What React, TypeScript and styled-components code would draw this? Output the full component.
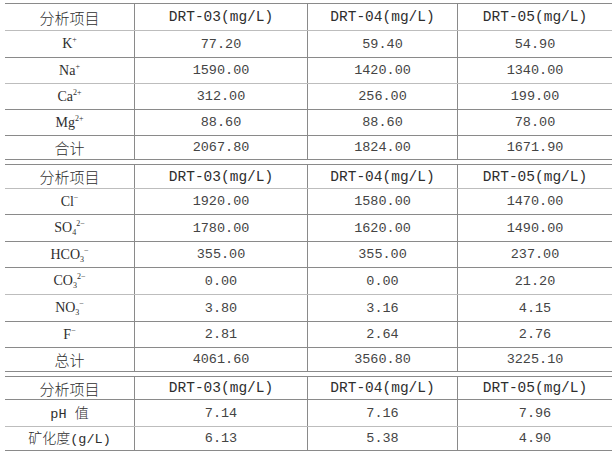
import React from "react";
import styled, { createGlobalStyle } from "styled-components";

const Global = createGlobalStyle`
  html, body { margin: 0; padding: 0; background: #ffffff; }
  body { font-family: "Liberation Mono", monospace; color: #2a2a2a; }
`;

const Page = styled.div`
  width: 612px;
  height: 456px;
  padding: 3px 0 0 5px;
  box-sizing: border-box;
  display: flex;
  flex-direction: column;
  gap: 4px;
  overflow: hidden;
`;

const Table = styled.div`
  width: 607px;
  border-top: 1px solid #8a8a8a;
  display: flex;
  flex-direction: column;
`;

const Row = styled.div<{ $h: number; $light?: boolean }>`
  display: grid;
  grid-template-columns: 129px 173px 150px 155px;
  height: ${(p) => p.$h}px;
  box-sizing: border-box;
  border-bottom: 1px solid ${(p) => (p.$light ? "#bdbdbd" : "#8a8a8a")};
`;

const Cell = styled.div<{ $kind?: "cjk" | "head" | "num" | "ion" }>`
  display: flex;
  align-items: center;
  justify-content: center;
  border-left: 1px solid #8a8a8a;
  white-space: pre;
  color: ${(p) => (p.$kind === "num" ? "#444444" : "#2e2e2e")};
  font-family: ${(p) =>
    p.$kind === "cjk"
      ? '"Noto Sans CJK SC", sans-serif'
      : p.$kind === "ion"
      ? '"Liberation Serif", "Noto Sans CJK SC", serif'
      : '"Liberation Mono", "Noto Sans CJK SC", monospace'};
  font-size: ${(p) =>
    p.$kind === "cjk" ? "15px" : p.$kind === "ion" ? "14px" : p.$kind === "head" ? "14.5px" : "13.5px"};
  font-weight: ${(p) => (p.$kind === "cjk" ? 300 : 400)};
  &:first-child { border-left: none; }
`;

const Label = styled.span`
  display: inline-block;
  line-height: 1;
`;

const Sup = styled.sup`
  font-size: 8px;
  vertical-align: 6px;
  line-height: 0;
`;

const Sub = styled.sub`
  font-size: 8px;
  vertical-align: -3px;
  line-height: 0;
`;

const Han = styled.span`
  font-family: "Noto Sans CJK SC", sans-serif;
  font-size: 14px;
  font-weight: 300;
`;

const Mono = styled.span`
  font-family: "Liberation Mono", monospace;
  font-size: 13.5px;
`;

type RowData = { label: React.ReactNode; kind?: "cjk" | "ion"; vals: string[]; h: number; light?: boolean };

const HeadRow = ({ h, light }: { h: number; light?: boolean }) => (
  <Row $h={h} $light={light}>
    <Cell $kind="cjk">分析项目</Cell>
    <Cell $kind="head">DRT-03(mg/L)</Cell>
    <Cell $kind="head">DRT-04(mg/L)</Cell>
    <Cell $kind="head">DRT-05(mg/L)</Cell>
  </Row>
);

const DataRows = ({ rows }: { rows: RowData[] }) => (
  <>
    {rows.map((r, i) => (
      <Row key={i} $h={r.h} $light={r.light}>
        <Cell $kind={r.kind === "cjk" ? "cjk" : "ion"}>
          <Label>{r.label}</Label>
        </Cell>
        {r.vals.map((v, j) => (
          <Cell key={j} $kind="num">{v}</Cell>
        ))}
      </Row>
    ))}
  </>
);

const cations: RowData[] = [
  { label: <>K<Sup>+</Sup></>, vals: ["77.20", "59.40", "54.90"], h: 27 },
  { label: <>Na<Sup>+</Sup></>, vals: ["1590.00", "1420.00", "1340.00"], h: 26, light: true },
  { label: <>Ca<Sup>2+</Sup></>, vals: ["312.00", "256.00", "199.00"], h: 26 },
  { label: <>Mg<Sup>2+</Sup></>, vals: ["88.60", "88.60", "78.00"], h: 26 },
  { label: "合计", kind: "cjk", vals: ["2067.80", "1824.00", "1671.90"], h: 24 },
];

const anions: RowData[] = [
  { label: <>Cl<Sup>−</Sup></>, vals: ["1920.00", "1580.00", "1470.00"], h: 26 },
  { label: <>SO<Sub>4</Sub><Sup>2−</Sup></>, vals: ["1780.00", "1620.00", "1490.00"], h: 27 },
  { label: <>HCO<Sub>3</Sub><Sup>−</Sup></>, vals: ["355.00", "355.00", "237.00"], h: 26 },
  { label: <>CO<Sub>3</Sub><Sup>2−</Sup></>, vals: ["0.00", "0.00", "21.20"], h: 27, light: true },
  { label: <>NO<Sub>3</Sub><Sup>−</Sup></>, vals: ["3.80", "3.16", "4.15"], h: 27 },
  { label: <>F<Sup>−</Sup></>, vals: ["2.81", "2.64", "2.76"], h: 26 },
  { label: "总计", kind: "cjk", vals: ["4061.60", "3560.80", "3225.10"], h: 24 },
];

const others: RowData[] = [
  { label: <><Mono>pH </Mono><Han>值</Han></>, vals: ["7.14", "7.16", "7.96"], h: 27, light: true },
  { label: <><Han>矿化度</Han><Mono>(g/L)</Mono></>, vals: ["6.13", "5.38", "4.90"], h: 24 },
];

export default function App() {
  return (
    <>
      <Global />
      <Page>
        <Table>
          <HeadRow h={27} light />
          <DataRows rows={cations} />
        </Table>
        <Table>
          <HeadRow h={24} light />
          <DataRows rows={anions} />
        </Table>
        <Table>
          <HeadRow h={23} />
          <DataRows rows={others} />
        </Table>
      </Page>
    </>
  );
}
